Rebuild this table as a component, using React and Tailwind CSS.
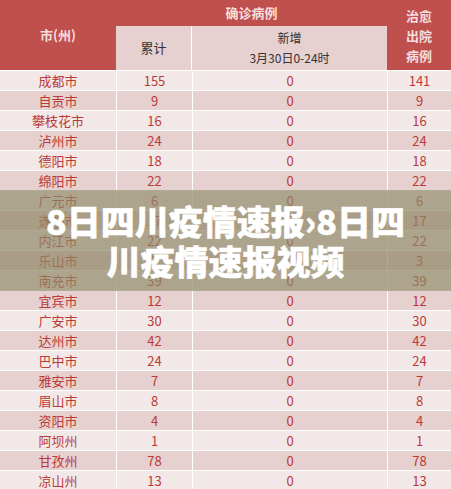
const rows = [
  ['成都市', 155, 0, 141],
  ['自贡市', 9, 0, 9],
  ['攀枝花市', 16, 0, 16],
  ['泸州市', 24, 0, 24],
  ['德阳市', 18, 0, 18],
  ['绵阳市', 22, 0, 22],
  ['广元市', 6, 0, 6],
  ['遂宁市', 17, 0, 17],
  ['内江市', 22, 0, 22],
  ['乐山市', 3, 0, 3],
  ['南充市', 39, 0, 39],
  ['宜宾市', 12, 0, 12],
  ['广安市', 30, 0, 30],
  ['达州市', 42, 0, 42],
  ['巴中市', 24, 0, 24],
  ['雅安市', 7, 0, 7],
  ['眉山市', 8, 0, 8],
  ['资阳市', 4, 0, 4],
  ['阿坝州', 1, 0, 1],
  ['甘孜州', 78, 0, 78],
  ['凉山州', 13, 0, 13],
];

const font = { fontFamily: '"Noto Sans CJK SC", "Noto Sans", sans-serif' };

export default function App() {
  return (
    <div className="relative h-[489px] w-[451px] overflow-hidden bg-white" style={font}>
      {/* header */}
      <div className="flex h-[70px] bg-[#c0504d] text-[13px]">
        <div className="flex w-[116px] items-center justify-center font-bold text-[#f5dede]">
          市(州)
        </div>
        <div className="flex w-[271px] flex-col">
          <div className="flex h-[26px] items-center justify-center font-bold text-[#f5dede]">
            确诊病例
          </div>
          <div className="flex flex-1 gap-px bg-white">
            <div className="flex w-[75px] items-center justify-center bg-[#e6d0d0] text-[#333]">
              累计
            </div>
            <div className="flex flex-1 flex-col items-center justify-center bg-[#e6d0d0] text-[12px] leading-[20px] text-[#333]">
              <span>新增</span>
              <span>3月30日0-24时</span>
            </div>
          </div>
        </div>
        <div className="flex flex-1 flex-col items-center justify-center pt-[2px] text-[13px] font-bold leading-[20px] text-[#f5dede]">
          <span>治愈</span>
          <span>出院</span>
          <span>病例</span>
        </div>
      </div>

      {/* body */}
      <div className="flex flex-col gap-px bg-white pt-px text-[13px] text-[#bb3a38]">
        {rows.map(([city, total, added, cured], i) => {
          const bg = i % 2 === 0 ? 'bg-[#f2e8e8]' : 'bg-[#e6d0d0]';
          return (
            <div key={city} className="grid h-[19px] grid-cols-[116px_75px_194px_1fr] gap-px leading-[19px]">
              <div className={`${bg} text-center`}>{city}</div>
              <div className={`${bg} text-center`}>{total}</div>
              <div className={`${bg} text-center`}>{added}</div>
              <div className={`${bg} text-center`}>{cured}</div>
            </div>
          );
        })}
      </div>

      {/* title band over the table */}
      <div className="absolute left-0 right-0 top-[190px] flex h-[101px] flex-col items-center justify-center bg-[#8e8865]/70 text-center text-[34px] font-black leading-[40px] text-white [-webkit-text-stroke:0.5px_white]">
        <span>8日四川疫情速报›8日四</span>
        <span>川疫情速报视频</span>
      </div>
    </div>
  );
}
